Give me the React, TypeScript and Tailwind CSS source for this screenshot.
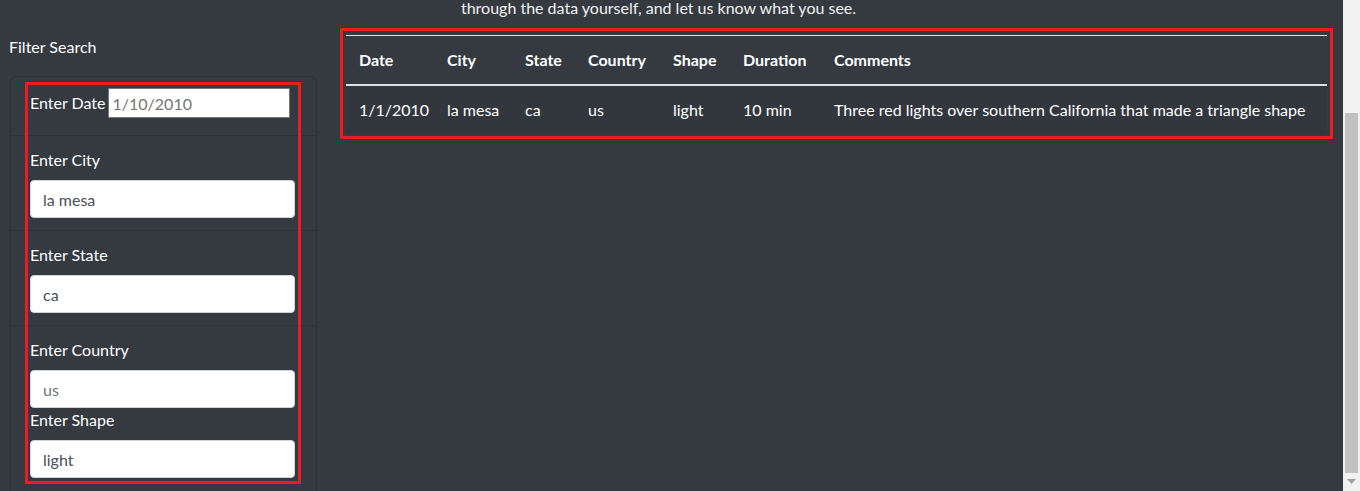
import React from 'react';

const rows = [
  {
    date: '1/1/2010',
    city: 'la mesa',
    state: 'ca',
    country: 'us',
    shape: 'light',
    duration: '10 min',
    comments: 'Three red lights over southern California that made a triangle shape',
  },
];

const columns = [
  { key: 'date', label: 'Date', w: 'w-[88px]' },
  { key: 'city', label: 'City', w: 'w-[78px]' },
  { key: 'state', label: 'State', w: 'w-[63px]' },
  { key: 'country', label: 'Country', w: 'w-[85px]' },
  { key: 'shape', label: 'Shape', w: 'w-[70px]' },
  { key: 'duration', label: 'Duration', w: 'w-[91px]' },
  { key: 'comments', label: 'Comments', w: 'w-[506px]' },
] as const;

const Field: React.FC<{ label: string; value?: string; placeholder?: string }> = ({ label, value, placeholder }) => (
  <>
    <label className="block leading-6 mb-2 text-white">{label}</label>
    <input
      type="text"
      defaultValue={value}
      placeholder={placeholder}
      className="block w-full h-[38px] px-3 rounded border border-[#ced4da] bg-white text-[#495057] placeholder:text-[#6c757d] outline-none"
    />
  </>
);

const App: React.FC = () => {
  return (
    <div className="flex h-[491px] overflow-hidden bg-[#343a40] text-base text-white font-['Lato','Noto_Sans',sans-serif]">
      <div className="flex-1 min-w-0">
        <p className="-mt-1 w-[1317px] text-center leading-6 text-[#f1f1f1]">
          through the data yourself, and let us know what you see.
        </p>

        <div className="flex mt-[15px]">
          {/* filter sidebar */}
          <aside className="w-[331px] pl-[9px] shrink-0">
            <h2 className="leading-6 text-white">Filter Search</h2>
            <div className="relative mt-[17px] ml-px w-[307px] border border-[#2d3238] rounded-md">
              <div className="flex items-center pt-[11px] pb-[17px] pl-[19px] pr-5">
                <label htmlFor="date" className="leading-6 mr-0.5">Enter Date</label>
                <input
                  id="date"
                  type="text"
                  placeholder="1/10/2010"
                  className="w-[182px] h-[30px] pl-1 border border-[#767676] bg-white text-[#495057] placeholder:text-[#757575] outline-none"
                />
              </div>
              <div className="border-t border-[#2d3238] pt-3 pb-3 pl-[19px] pr-[21px]">
                <Field label="Enter City" value="la mesa" />
              </div>
              <div className="border-t border-[#2d3238] pt-3 pb-3 pl-[19px] pr-[21px]">
                <Field label="Enter State" value="ca" />
              </div>
              <div className="border-t border-[#2d3238] pt-3 pb-6 pl-[19px] pr-[21px]">
                <Field label="Enter Country" placeholder="us" />
                <label className="block leading-6 mb-2 text-white">Enter Shape</label>
                <input
                  type="text"
                  defaultValue="light"
                  className="block w-full h-[38px] px-3 rounded border border-[#ced4da] bg-white text-[#495057] outline-none"
                />
              </div>
              {/* annotation box */}
              <div className="absolute left-[14px] top-[5px] w-[276px] h-[402px] border-[3px] border-[#ed1c24] pointer-events-none" />
            </div>
          </aside>

          {/* results table */}
          <main className="pl-[15px]">
            <div className="relative w-[981px]">
              <table className="w-[981px] table-fixed border-collapse text-left">
                <thead>
                  <tr className="border-t border-[#dee2e6]">
                    {columns.map(c => (
                      <th key={c.key} className={`${c.w} pl-[13px] pr-[11px] py-3 leading-6 font-bold border-b-2 border-[#dee2e6]`}>
                        {c.label}
                      </th>
                    ))}
                  </tr>
                </thead>
                <tbody>
                  {rows.map((r, i) => (
                    <tr key={i} className="bg-[#32373d]">
                      {columns.map(c => (
                        <td key={c.key} className="pl-[13px] pr-[11px] py-3 leading-6 whitespace-nowrap">
                          {r[c.key]}
                        </td>
                      ))}
                    </tr>
                  ))}
                </tbody>
              </table>
              <div className="absolute -left-[6px] -right-[6px] -top-[7px] -bottom-[5px] border-[3px] border-[#ed1c24] pointer-events-none" />
            </div>
          </main>
        </div>
      </div>

      {/* page scrollbar */}
      <div className="w-[17px] shrink-0 bg-[#f1f1f1] flex flex-col items-center pt-[113px]">
        <div className="w-[13px] h-[360px] bg-[#c1c1c1]" />
        <svg className="mt-[6px]" width="9" height="6" viewBox="0 0 9 6">
          <path d="M0 0h9L4.5 5z" fill="#a3a3a3" />
        </svg>
      </div>
    </div>
  );
};

export default App;
